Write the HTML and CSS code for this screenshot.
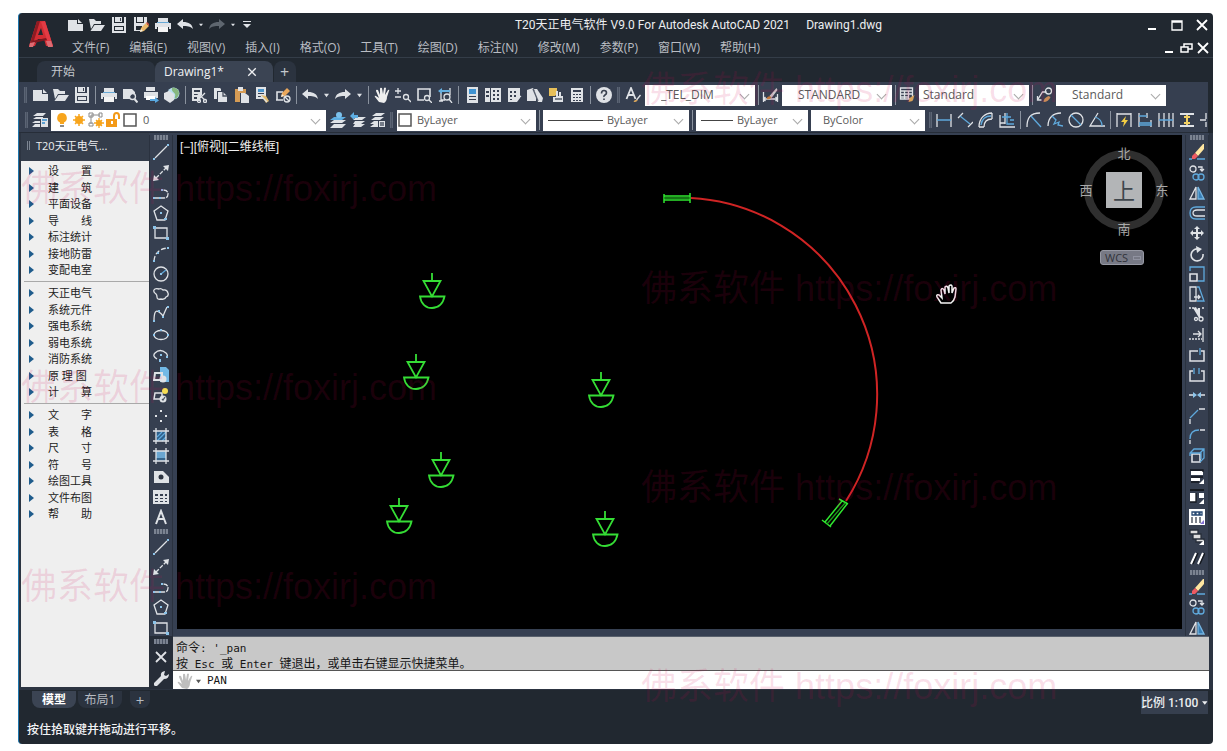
FILE: index.html
```html
<!DOCTYPE html>
<html lang="zh-CN">
<head>
<meta charset="utf-8">
<title>T20天正电气软件 V9.0 For Autodesk AutoCAD 2021</title>
<link rel="stylesheet" href="styles.css">
</head>
<body>
<svg class="sprite" aria-hidden="true">
  <symbol id="new" viewBox="0 0 16 16"><path class="f" d="M1 3h9v4h6v7H1z"/><path class="f" d="M11 2l4 4h-4z"/></symbol>
  <symbol id="open" viewBox="0 0 16 16"><path class="f" d="M0 2h5l2 2h5v3H5l-3 5z"/><path class="f" d="M5.500 8H16l-4 6H1.500z"/></symbol>
  <symbol id="save" viewBox="0 0 16 16"><path class="f" fill-rule="evenodd" d="M1 0h2v6h10V0h2v16H1zM3 9v5h10V9z"/><path class="f" d="M4 0h7v5H4zM4 10h8v3H4z"/><path d="M9 1h1v3H9z" fill="#39414f"/></symbol>
  <symbol id="saveas" viewBox="0 0 16 16"><path class="f" fill-rule="evenodd" d="M1 0h2v6h8V0h3v8l-6 6H1zM3 9v4h6V9z"/><path class="f" d="M4 0h6v5H4z"/><path d="M7 15l1-4 5-5 3 3-5 5z" fill="#e9b868"/><path d="M7 15l1-3 2 2z" fill="#f5eee0"/><path d="M13 6l3 3 0-2-2-2z" fill="#d0523f"/></symbol>
  <symbol id="print" viewBox="0 0 16 16"><path class="f" d="M3 1h10v4H3zM0 6h16v6h-2v-2H2v2H0z"/><path d="M3 10h10v5H3z" fill="#f4f4f4"/><path d="M2 5.500h12" stroke="#68a9d6" stroke-width="1"/></symbol>
  <symbol id="preview" viewBox="0 0 16 16"><path class="f" d="M1 2h9l3 3v2a4 4 0 0 0-5 5H1z"/><circle class="s" cx="10.500" cy="9.500" r="3"/><path class="s" d="M12.500 12l3 3.500" stroke-width="2"/></symbol>
  <symbol id="plot" viewBox="0 0 16 16"><path class="f" d="M3 0h9v4H3zM1 5h14v6H1z"/><path d="M3 9h9v4H3z" fill="#fff"/><path d="M7 12h5v-2l4 3.500-4 2.500v-2H7z" fill="#59a8e0"/></symbol>
  <symbol id="globe" viewBox="0 0 16 16"><circle cx="9.500" cy="6.500" r="6" fill="#b9dff0"/><path d="M8 1c4-1 7 2 7 5s-2 5-4 6c-1-2 1-3 0-5S7 4 8 1z" fill="#87b880"/><path class="f" d="M0 6l5-2 5 3v6l-4 3-6-4z"/></symbol>
  <symbol id="cut" viewBox="0 0 16 16"><path class="f" fill-rule="evenodd" d="M1 1h10v7l-2 2v4H1zM3 3v2h6V3zm0 4v1h5V7zm0 3v2h3v-2z"/><path class="s" d="M6 6l8 7M14 6l-7 7"/><circle class="s" cx="14" cy="14" r="1.500"/><circle class="s" cx="8" cy="14" r="1.500"/></symbol>
  <symbol id="copy" viewBox="0 0 16 16"><path class="f" d="M2 1h6l1 1v2H5v8H2z"/><path class="f" d="M6 5h5l4 4v6H6z"/><path d="M11 5v4h4" fill="none" stroke="#444c5b"/></symbol>
  <symbol id="paste" viewBox="0 0 16 16"><path d="M2 2h11v4H7v9H2z" fill="#d69c55"/><path class="f" d="M5 0h5v4H5zM8 6h4l4 3v7H8z"/></symbol>
  <symbol id="match" viewBox="0 0 16 16"><path class="f" fill-rule="evenodd" d="M2 0h10v12H2zM4 6v1h6V6zm0 3v1h6V9z"/><path d="M4 2h6v3H4z" fill="#4b94cb"/><path d="M7 8l5 1 3 5-3 2z" fill="#e3bb6c"/><path class="s" d="M7 9l6 6"/></symbol>
  <symbol id="blockedit" viewBox="0 0 16 16"><path class="s" d="M8 5H2v8h6M1 13h7" stroke-width="1.600"/><path d="M6 10l1-4 5-5 3 3-5 5z" fill="#eaa85c"/><path d="M6 10l1-3 2 2z" fill="#f5eee0"/><circle class="s" cx="12" cy="12" r="3"/><path class="s" d="M10 10l4 4"/></symbol>
  <symbol id="undo" viewBox="0 0 16 16"><path class="f" d="M0 7l6-5v3c6 0 9 2 10 7-3-3-6-3-10-3v3z"/></symbol>
  <symbol id="redo" viewBox="0 0 16 16"><path class="f" d="M16 7l-6-5v3C4 5 1 7 0 12c3-3 6-3 10-3v3z"/></symbol>
  <symbol id="hand" viewBox="0 0 16 16"><path d="M5 15L1 10q-1-2 1-1l3 2L2 4q0-2 2-1l2 5L6 2q0-2 2-1l1 6 1-6q1-1 2 0l-1 7 3-5q2-1 1 1l-2 6q0 4-3 6z" fill="#eee"/></symbol>
  <symbol id="zoomrt" viewBox="0 0 16 16"><path class="s" d="M0 4h6M3 1v6M0 10h6"/><circle class="s" cx="11" cy="10" r="2.500"/><path class="s" d="M13 12l3 3"/></symbol>
  <symbol id="zoomwin" viewBox="0 0 16 16"><path class="s" d="M8 13H2V2h12v8" stroke-width="1.600"/><circle class="s" cx="11" cy="11" r="2.500"/><path class="s" d="M13 13l3 3"/></symbol>
  <symbol id="zoomprev" viewBox="0 0 16 16"><path class="s" d="M4 5v8h4M13 5v3M2 14h4M13 1v4"/><path d="M1 4l4-3v2h8v2H5v2z" fill="#65b0e0"/><circle class="s" cx="10" cy="10" r="3"/><path class="s" d="M12 12l3 4"/></symbol>
  <symbol id="props" viewBox="0 0 16 16"><path class="f" fill-rule="evenodd" d="M3 0h11v16H3zM5 9v1h7V9zm0 3v1h7v-1z"/><path d="M5 2h7v5H5z" fill="#3f93d2"/></symbol>
  <symbol id="center" viewBox="0 0 16 16"><path class="f" fill-rule="evenodd" d="M0 1h5v14H0zM1 4v2h3V4zm0 4v2h3V8zM6 1h10v14H6zM8 3v2h2V3zm4 0v2h2V3zM8 7v2h2V7zm4 0v2h2V7zM8 11v2h2v-2zm4 0v2h2v-2z"/></symbol>
  <symbol id="palette" viewBox="0 0 16 16"><path class="f" fill-rule="evenodd" d="M2 1h12v10l-3 4H2zM4 4v2h2V4zm4 0v2h2V4zM4 8v2h2V8zm4 0v2h2V8zM4 12v1h2v-1z"/><path class="s" d="M10 13l5-4"/></symbol>
  <symbol id="sheets" viewBox="0 0 16 16"><path class="f" d="M0 3l6-2 3 6 0 7H0z"/><path class="f" d="M7 2l3 0 6 9-1 4h-4z"/><path d="M6 2l5 12" stroke="#555d6b" fill="none"/></symbol>
  <symbol id="markup" viewBox="0 0 16 16"><path d="M1 1h8v6l-2 2H1z" fill="#e7bf59"/><path class="f" d="M8 4h2v5h1V5h2v4h2v6H5v-5h3z"/><path d="M7 12h7" stroke="#535b69"/></symbol>
  <symbol id="calc" viewBox="0 0 16 16"><path class="f" fill-rule="evenodd" d="M2 1h12v14H2zM4 3v2h8V3zm0 4v1h2V7zm3 0v1h2V7zm3 0v1h2V7zm-6 3v1h2v-1zm3 0v1h2v-1zm3 0v1h2v-1zm-6 3v1h2v-1zm3 0v1h2v-1zm3 0v1h2v-1z"/></symbol>
  <symbol id="help" viewBox="0 0 16 16"><circle class="f" cx="8" cy="8" r="8"/><path d="M5.500 6.500q0-3 2.500-3t2.500 2.500q0 1-1.500 2T8 10" fill="none" stroke="#39414f" stroke-width="1.600"/><path d="M7.200 11.500h1.600v1.500H7.200z" fill="#39414f"/></symbol>
  <symbol id="textstyle" viewBox="0 0 16 16"><path class="s" d="M1 12L5.500 1 10 12M3 8h6" stroke-width="1.800"/><path class="s" d="M15 8l-4 5"/><path d="M8 15q1-3 4-2 0 2-4 2z" fill="#d7a45c"/></symbol>
  <symbol id="dimstyle" viewBox="0 0 16 16"><path class="s" d="M1 5v10M15 7v8M1 12h14M3 10l-2 2 2 2M13 10l2 2-2 2"/><path d="M7 9l7-8 1 2-6 8z" fill="#ccc"/><path d="M4 12q1-4 5-2-1 3-5 2z" fill="#c97a3d"/></symbol>
  <symbol id="tablestyle" viewBox="0 0 16 16"><path class="s" d="M1 1h12v11H1zM1 4h12M1 7h12M1 10h8M5 4v8M9 4v8"/><path d="M9 15l1-4 5-3-2 6z" fill="#d9a25b"/></symbol>
  <symbol id="leaderstyle" viewBox="0 0 16 16"><path class="s" d="M1 13L6 5h4M1 9v4h4"/><circle class="s" cx="12" cy="4" r="3"/><path d="M7 15q0-4 5-6l2 1q-2 5-7 5z" fill="#c98a58"/></symbol>
  <symbol id="layers" viewBox="0 0 16 16"><path class="f" d="M5 1h9l-3 3H1zM4 5h7v2H1zM3 9h5v2H0zM3 12h5v3H0z"/><path class="f" d="M9 6h7v9H9z"/><path d="M10 8h5M10 11h3" stroke="#358ccb"/></symbol>
  <symbol id="bulb" viewBox="0 0 16 16"><path d="M8 1a5 5 0 0 1 2 9.500V12H6v-1.500A5 5 0 0 1 8 1z" fill="#f7a51d"/><path d="M6 13h4v2H6z" fill="#8c8c8c"/></symbol>
  <symbol id="sun" viewBox="0 0 16 16"><circle cx="8" cy="8" r="4" fill="#f7a51d"/><path d="M8 2v12M2 8h12M4 4l8 8M12 4l-8 8" stroke="#f7a51d" stroke-width="1.500"/></symbol>
  <symbol id="vpfreeze" viewBox="0 0 16 16"><path d="M3 12V3h9M1 1h4v4H1zM11 1h3v4h-3zM1 11h4v3H1z" fill="none" stroke="#8a8a8a" stroke-width="1"/><circle cx="11" cy="11" r="3" fill="#f7a51d"/><path d="M11 6v10M6 11h10M8 8l6 6M14 8l-6 6" stroke="#f7a51d"/></symbol>
  <symbol id="lock" viewBox="0 0 16 16"><path d="M1 7h11v8H1z" fill="#f39a18"/><path d="M9 7V4q0-3 2.500-3T14 4v3" fill="none" stroke="#f39a18" stroke-width="2"/><path d="M6 9h2v3H6z" fill="#fff"/></symbol>
  <symbol id="swatch" viewBox="0 0 16 16"><path d="M2 2h12v12H2z" fill="#fff" stroke="#555" stroke-width="1.500"/></symbol>
  <symbol id="laycur" viewBox="0 0 16 16"><path class="f" d="M4 8h12l-4 3H0zM4 12h12l-4 4H0z"/><path d="M4 5h12l-4 3H0z" fill="#5eaee2"/><circle cx="9" cy="3" r="3" fill="#7bc1ec"/></symbol>
  <symbol id="layprev" viewBox="0 0 16 16"><path class="f" d="M6 5h10l-4 3H3zM5 9h10l-4 3H3zM5 12h10l-4 3H3z"/><path d="M0 4l4-4v3h4v3H4v2z" fill="#5eaee2"/></symbol>
  <symbol id="laystate" viewBox="0 0 16 16"><path class="f" d="M6 1h9l-4 3H2zM5 5h9l-4 3H1zM4 9h4v3H0zM4 12h4v3H0z"/><path class="f" d="M9 9h6v6H9z"/><path d="M10 11h4M10 13h4" stroke="#525a69"/></symbol>
  <symbol id="dlinear" viewBox="0 0 16 16"><path class="s" d="M1 2v13M15 2v13"/><path class="b" d="M1 8h14"/></symbol>
  <symbol id="dalign" viewBox="0 0 16 16"><path class="s" d="M1 6l5-5M11 15l5-5"/><path class="b" d="M3 4l10 8"/></symbol>
  <symbol id="darc" viewBox="0 0 16 16"><path class="s" d="M1 15C1 6 7 1 14 1M6 15c0-5 3-8 8-8M1 15h5M14 1v6"/><path class="b" d="M3 13C4 6 8 4 13 4"/></symbol>
  <symbol id="dord" viewBox="0 0 16 16"><path class="s" d="M1 3v12h15M6 1v11M1 11h5"/><path class="b" d="M3 5h9M8 1v11h7M11 8h4"/></symbol>
  <symbol id="drad" viewBox="0 0 16 16"><path class="s" d="M14 1C4 1 1 6 1 15"/><path class="b" d="M5 4l10 11"/></symbol>
  <symbol id="djog" viewBox="0 0 16 16"><path class="s" d="M14 1C6 1 1 6 1 14"/><path class="b" d="M5 4l4 4-2 4 5-2-1 3 5 1"/></symbol>
  <symbol id="ddia" viewBox="0 0 16 16"><circle class="s" cx="8" cy="8" r="7"/><path class="b" d="M3 3l10 10"/></symbol>
  <symbol id="dang" viewBox="0 0 16 16"><path class="s" d="M9 1L1 14h15"/><path class="b" d="M6 5q7 2 7 9"/></symbol>
  <symbol id="dquick" viewBox="0 0 16 16"><path class="s" d="M1 1v14M15 1v14M1 2h14"/><path d="M10 4l-5 6h3l-1 5 5-7H9z" fill="#f3ce43"/></symbol>
  <symbol id="dbase" viewBox="0 0 16 16"><path class="s" d="M2 1v14M10 1v5M14 8v7"/><path class="b" d="M2 4h8M2 11h12v2H2"/></symbol>
  <symbol id="dcont" viewBox="0 0 16 16"><path class="s" d="M1 1v14M6 1v14M11 1v14M15 1v14"/><path class="b" d="M1 8h14"/></symbol>
  <symbol id="dspace" viewBox="0 0 16 16"><path class="s" d="M1 2h14M1 14h14" stroke-width="2"/><path d="M8 3v10M5 5h6M5 11h6" stroke="#f3d163" stroke-width="2" fill="none"/></symbol>
  <symbol id="dbreak" viewBox="0 0 16 16"><path class="s" d="M6 1v6M6 10v5M0 8h6"/></symbol>
  <symbol id="line" viewBox="0 0 16 16"><path class="s" d="M2 14L14 2"/><path class="bf" d="M0 14h2v2H0zM14 0h2v2h-2z"/></symbol>
  <symbol id="xline" viewBox="0 0 16 16"><path class="s" d="M3 13L13 3" stroke-dasharray="4 1.500"/><path class="f" d="M0 16l1-6 5 5zM16 0l-6 1 5 5z"/></symbol>
  <symbol id="pline" viewBox="0 0 16 16"><path class="s" d="M1 13h10q4 0 4-4t-5-4" stroke-dasharray="5 1"/><path class="bf" d="M0 12h2v2H0zM6 12h2v2H6zM8 4h2v2H8z"/></symbol>
  <symbol id="polygon" viewBox="0 0 16 16"><path class="s" d="M8 1l7 5-3 9H4L1 6z"/><path class="bf" d="M7 7h2v2H7zM11 13h3v2h-3z"/></symbol>
  <symbol id="rect" viewBox="0 0 16 16"><path class="s" d="M3 3h11v10H2V4"/><path class="bf" d="M0 1h3v3H0zM13 12h3v3h-3z"/></symbol>
  <symbol id="arc" viewBox="0 0 16 16"><path class="s" d="M1 15Q2 3 15 2" stroke-dasharray="5 2"/><path class="bf" d="M0 14h2v2H0zM4 6h2v2H4zM14 1h2v2h-2z"/></symbol>
  <symbol id="circle" viewBox="0 0 16 16"><circle class="s" cx="8" cy="8" r="7"/><path class="b" d="M8 8l5-4"/><path class="bf" d="M7 7h2v2H7z"/></symbol>
  <symbol id="cloud" viewBox="0 0 16 16"><path class="s" d="M3 8Q0 6 1 4t5-1q2-1 4 1 4-1 5 3 1 3-2 4-1 3-5 2-4 1-4-2 0-2-1-3z"/></symbol>
  <symbol id="spline" viewBox="0 0 16 16"><path class="s" d="M1 15q0-13 5-9t4 5 4-10"/><path class="bf" d="M0 14h2v2H0zM5 4h2v2H5zM9 10h2v2H9zM14 0h2v2h-2z"/></symbol>
  <symbol id="ellipse" viewBox="0 0 16 16"><ellipse class="s" cx="8" cy="8" rx="7" ry="4.500"/><path class="bf" d="M0 7h2v2H0zM14 7h2v2h-2zM7 2h2v2H7z"/></symbol>
  <symbol id="earc" viewBox="0 0 16 16"><path class="s" d="M4 12Q-1 9 2 6q5-5 11 0 2 2 1 4"/><path class="bf" d="M7 7h2v2H7zM6 12h2v3H6zM13 9h2v2h-2z"/></symbol>
  <symbol id="insert" viewBox="0 0 16 16"><path d="M7 0h6l3 3v12H7z" fill="#72b9e6"/><path class="s" d="M2 6h7v7H1z" stroke-width="2"/><circle class="f" cx="10" cy="12" r="3.500"/></symbol>
  <symbol id="block" viewBox="0 0 16 16"><path class="s" d="M2 6h7v6H1z" stroke-width="1.500"/><circle class="f" cx="10" cy="12" r="3.500"/><circle cx="12" cy="4" r="3" fill="#f5dc54"/><path d="M9 12l1 1 2-3" fill="none" stroke="#4a5261"/></symbol>
  <symbol id="points" viewBox="0 0 16 16"><path class="f" d="M7 2h2v2H7zM2 7h2v2H2zM12 7h2v2h-2zM7 12h2v2H7z"/></symbol>
  <symbol id="hatch" viewBox="0 0 16 16"><path d="M3 3h10v10H3z" fill="#2e5f89"/><path class="b" d="M4 9l5-5M4 13l9-9M9 13l4-4"/><path class="s" d="M3 0v16M13 0v16M0 3h16M0 13h16"/></symbol>
  <symbol id="gradient" viewBox="0 0 16 16"><path d="M3 3h10v7H3z" fill="#6aa6d1"/><path d="M3 10h10v3H3z" fill="#36658c"/><path class="s" d="M3 0v16M13 0v16M0 3h16M0 13h16"/></symbol>
  <symbol id="region" viewBox="0 0 16 16"><path class="f" d="M1 2h9l6 6v6H1z"/><circle cx="8" cy="8" r="2.500" fill="#2c3340"/></symbol>
  <symbol id="table" viewBox="0 0 16 16"><path class="f" fill-rule="evenodd" d="M0 1h16v14H0zM2 5v2h3V5zm5 0v2h3V5zm5 0v2h2V5zM2 9v1h3V9zm5 0v1h3V9zm5 0v1h2V9zM2 12v1h3v-1zm5 0v1h3v-1zm5 0v1h2v-1z"/></symbol>
  <symbol id="mtext" viewBox="0 0 16 16"><path class="s" d="M3 15L8 2l5 13M5 10h6" stroke-width="2"/></symbol>
  <symbol id="erase" viewBox="0 0 16 16"><path d="M6 9l8-9h1v5l-6 7z" fill="#ffe6a0"/><path d="M3 12l3-3 3 3-3 3H3z" fill="#ee5a62"/><path class="b" d="M0 15h3M8 15h8"/></symbol>
  <symbol id="copyobj" viewBox="0 0 16 16"><circle class="s" cx="4" cy="4" r="3"/><path class="s" d="M9 2h4v4M11 4l2 2 2-2"/><circle class="b" cx="7" cy="12" r="3"/><circle class="b" cx="12" cy="12" r="3"/></symbol>
  <symbol id="mirror" viewBox="0 0 16 16"><path class="s" d="M7 2v12H1z"/><path d="M9 2v12h6z" fill="#387eb5" stroke="#76b5e1"/></symbol>
  <symbol id="offset" viewBox="0 0 16 16"><path class="s" d="M16 5H8Q4 5 4 8t4 3h8"/><path class="b" d="M16 2H7Q1 2 1 8t6 6h9"/></symbol>
  <symbol id="move" viewBox="0 0 16 16"><path class="f" d="M8 1l3 3H9v3h3V5l3 3-3 3V9H9v3h2l-3 3-3-3h2V9H4v2L1 8l3-3v2h3V4H5z"/></symbol>
  <symbol id="rotate" viewBox="0 0 16 16"><path class="s" d="M9 3a6 6 0 1 0 5 5" stroke-width="1.600"/><path class="f" d="M7 0l6 3-5 4z"/></symbol>
  <symbol id="scale" viewBox="0 0 16 16"><path class="b" d="M1 5V1h14v14H9"/><path class="s" d="M1 8h7v7H1z" stroke-width="1.600"/></symbol>
  <symbol id="stretch" viewBox="0 0 16 16"><path class="s" d="M1 1h6v14H1zM5 11h6M9 9l2 2-2 2"/><path class="b" d="M8 1h2l5 14H8"/></symbol>
  <symbol id="trim" viewBox="0 0 16 16"><path class="s" d="M0 2h5M13 2h3" stroke-dasharray="2 1"/><path class="f" d="M4 2l3-1 5 10-2 1zM9 2h2v8H9L7 7z"/><circle class="s" cx="7" cy="13" r="1.500"/><circle class="s" cx="12" cy="13" r="2"/></symbol>
  <symbol id="extend" viewBox="0 0 16 16"><path class="s" d="M14 1v14M4 7h7M9 4l3 3-3 3"/><path class="s" d="M0 12h13" stroke-dasharray="2 1"/></symbol>
  <symbol id="breakpt" viewBox="0 0 16 16"><path class="s" d="M9 4H1v10h14V4h-3" stroke-width="1.500"/><path class="b" d="M11 1v7"/></symbol>
  <symbol id="break" viewBox="0 0 16 16"><path class="s" d="M4 4H1v10h14V4h-3" stroke-width="1.500"/><path class="b" d="M5 1v6M10 1v6"/></symbol>
  <symbol id="join" viewBox="0 0 16 16"><path class="s" d="M0 8h5M11 8h5"/><path class="bf" d="M4 5l4 3-4 3zM12 5L8 8l4 3z"/></symbol>
  <symbol id="chamfer" viewBox="0 0 16 16"><path class="s" d="M1 16v-5M10 1h6"/><path class="b" d="M1 10l8-8"/></symbol>
  <symbol id="fillet" viewBox="0 0 16 16"><path class="s" d="M1 16v-4M11 2h5"/><path class="b" d="M1 11q0-9 9-9"/></symbol>
  <symbol id="explode" viewBox="0 0 16 16"><path class="s" d="M3 6h8v8H3z" stroke-width="1.600"/><path class="b" d="M1 8V5l4-4h10v9l-4 4M11 5l4-4M1 5h11v6"/></symbol>
  <symbol id="front" viewBox="0 0 16 16"><path d="M2 2h12v4H2zM2 9h9v3H2z" fill="#fff"/><path d="M1 1h13v2M2 8h12M2 13h8" stroke="#15191f" fill="none"/><path d="M15 10v5h-5z" fill="#fff"/></symbol>
  <symbol id="back" viewBox="0 0 16 16"><path d="M1 1h14" stroke="#15191f" stroke-width="2"/><path d="M1 4h6v9H1zM10 4h5v5h-5z" fill="#fff"/><path d="M7 4v9H1" fill="none" stroke="#15191f"/><path d="M15 10v5h-5z" fill="#fff"/></symbol>
  <symbol id="order" viewBox="0 0 16 16"><path d="M0 0h16v16H0z" fill="#fff"/><path d="M3 3h3v3H3zM7 3h3v3H7zM11 3h2v3h-2z" fill="none" stroke="#284a73"/><path d="M3 8v6M7 8v6M11 8v6" stroke="#39414f"/><path d="M15 11v4h-4z" fill="#8370d4"/></symbol>
  <symbol id="annot" viewBox="0 0 16 16"><path d="M1 1h8v4H1zM4 5h8v5H4zM7 10h8v3H7z" fill="#dedede" stroke="#272e39"/><path d="M15 11v5h-5z" fill="#fff"/></symbol>
  <symbol id="parallel" viewBox="0 0 16 16"><path d="M2 14L7 3M9 14l5-11" stroke="#fff" stroke-width="2"/><path d="M4 14L9 3M11 14l5-11" stroke="#15191f"/></symbol>
  <symbol id="x" viewBox="0 0 16 16"><path class="s" d="M3 3l10 10M13 3L3 13" stroke-width="1.800"/></symbol>
  <symbol id="min" viewBox="0 0 16 16"><path class="s" d="M4 12h8" stroke-width="2"/></symbol>
  <symbol id="max" viewBox="0 0 16 16"><path class="s" d="M3 4h10v9H3zM3 5h10"/></symbol>
  <symbol id="restore" viewBox="0 0 16 16"><path class="s" d="M3 7h7v5H3zM6 7V4h8v5h-4" stroke-width="1.500"/></symbol>
  <symbol id="caret" viewBox="0 0 6 6"><path class="f" d="M0 1h6L3 5z"/></symbol>
  <symbol id="drop" viewBox="0 0 12 12"><path class="f" d="M2 2h8v1H2zM2 5h8l-4 4z"/></symbol>
  <symbol id="wrench" viewBox="0 0 16 16"><path class="f" d="M1 13l7-7q-1-4 4-5l-1 4 2 1 3-2q0 5-5 5l-7 7q-2 1-3-1z"/></symbol>
  <symbol id="lamp" viewBox="-14 -1 28 38" overflow="visible"><path d="M0 0v8M-8.500 8h17L0 23.500zM-12 23.500h24.500C11 31 6 35 0 35s-11-4-12-11.500z" fill="none" stroke="#35dd35" stroke-width="1.800"/></symbol>
</svg>

<main class="app">
  <header class="header">
    <svg class="logo" viewBox="0 0 24 28" role="img" aria-label="AutoCAD"><path d="M8 1h8l8 25h-7l-2-7H9l-3 7H0z" fill="#d12c33"/><path d="M12 8l2 7h-5z" fill="#212830"/><path d="M8 1h3L3 27H0z" fill="#8e1b22"/><path d="M16 1l8 25h-4L12 2z" fill="#e23b44"/><path d="M3 21l14-3 1 2-13 3z" fill="#7d1820"/><path d="M1 23l5-1-2 5H0zM17 21l5 0 2 6h-5z" fill="#dc6d74"/></svg>
    <div class="rows">
      <div class="titlebar">
        <div class="quick">
          <button aria-label="新建"><svg><use href="#new"/></svg></button>
          <button aria-label="打开"><svg><use href="#open"/></svg></button>
          <button aria-label="保存"><svg><use href="#save"/></svg></button>
          <button aria-label="另存为"><svg><use href="#saveas"/></svg></button>
          <button aria-label="打印"><svg><use href="#print"/></svg></button>
          <button aria-label="放弃"><svg><use href="#undo"/></svg></button>
          <button class="tiny" aria-label="放弃列表"><svg><use href="#caret"/></svg></button>
          <button class="dim" aria-label="重做"><svg><use href="#redo"/></svg></button>
          <button class="tiny" aria-label="重做列表"><svg><use href="#caret"/></svg></button>
          <button class="drop" aria-label="自定义"><svg><use href="#drop"/></svg></button>
        </div>
        <h1 class="title">T20天正电气软件 V9.0 For Autodesk AutoCAD 2021<span>Drawing1.dwg</span></h1>
        <div class="controls wide">
          <button aria-label="最小化"><svg><use href="#min"/></svg></button>
          <button aria-label="最大化"><svg><use href="#max"/></svg></button>
          <button aria-label="关闭"><svg><use href="#x"/></svg></button>
        </div>
      </div>
      <div class="menurow">
        <nav class="menus">
          <button>文件(F)</button><button>编辑(E)</button><button>视图(V)</button><button>插入(I)</button><button>格式(O)</button><button>工具(T)</button><button>绘图(D)</button><button>标注(N)</button><button>修改(M)</button><button>参数(P)</button><button>窗口(W)</button><button>帮助(H)</button>
        </nav>
        <div class="controls">
          <button aria-label="最小化图形"><svg><use href="#min"/></svg></button>
          <button aria-label="还原图形"><svg><use href="#restore"/></svg></button>
          <button aria-label="关闭图形"><svg><use href="#x"/></svg></button>
        </div>
      </div>
    </div>
  </header>

  <div class="filetabs">
    <button class="filetab">开始</button>
    <div class="filetab on"><button>Drawing1*</button><button class="tabclose" aria-label="关闭标签"><svg><use href="#x"/></svg></button></div>
    <button class="filetab add" aria-label="新图形">+</button>
  </div>

  <div class="toolbar">
    <i class="grip"></i>
    <button aria-label="新建"><svg><use href="#new"/></svg></button>
    <button aria-label="打开"><svg><use href="#open"/></svg></button>
    <button aria-label="保存"><svg><use href="#save"/></svg></button>
    <i class="sep"></i>
    <button aria-label="打印"><svg><use href="#print"/></svg></button>
    <button aria-label="打印预览"><svg><use href="#preview"/></svg></button>
    <button aria-label="发布"><svg><use href="#plot"/></svg></button>
    <button aria-label="三维打印"><svg><use href="#globe"/></svg></button>
    <i class="sep"></i>
    <button aria-label="剪切"><svg><use href="#cut"/></svg></button>
    <button aria-label="复制"><svg><use href="#copy"/></svg></button>
    <button aria-label="粘贴"><svg><use href="#paste"/></svg></button>
    <button aria-label="特性匹配"><svg><use href="#match"/></svg></button>
    <button aria-label="块编辑器"><svg><use href="#blockedit"/></svg></button>
    <i class="sep"></i>
    <button aria-label="放弃"><svg><use href="#undo"/></svg></button>
    <button class="tiny" aria-label="放弃列表"><svg><use href="#caret"/></svg></button>
    <button aria-label="重做"><svg><use href="#redo"/></svg></button>
    <button class="tiny" aria-label="重做列表"><svg><use href="#caret"/></svg></button>
    <i class="sep"></i>
    <button aria-label="实时平移"><svg><use href="#hand"/></svg></button>
    <button aria-label="实时缩放"><svg><use href="#zoomrt"/></svg></button>
    <button aria-label="窗口缩放"><svg><use href="#zoomwin"/></svg></button>
    <button aria-label="缩放上一个"><svg><use href="#zoomprev"/></svg></button>
    <i class="sep"></i>
    <button aria-label="特性"><svg><use href="#props"/></svg></button>
    <button aria-label="设计中心"><svg><use href="#center"/></svg></button>
    <button aria-label="工具选项板"><svg><use href="#palette"/></svg></button>
    <button aria-label="图纸集"><svg><use href="#sheets"/></svg></button>
    <button aria-label="标记集"><svg><use href="#markup"/></svg></button>
    <button aria-label="计算器"><svg><use href="#calc"/></svg></button>
    <i class="sep"></i>
    <button aria-label="帮助"><svg><use href="#help"/></svg></button>
    <i class="grip"></i>
    <div class="styles">
      <button aria-label="文字样式管理"><svg><use href="#textstyle"/></svg></button>
      <div class="combo"><select class="in16" aria-label="文字样式"><option>_TEL_DIM</option></select></div>
      <i class="sep"></i>
      <button aria-label="标注样式管理"><svg><use href="#dimstyle"/></svg></button>
      <div class="combo"><select class="in16" aria-label="标注样式"><option>STANDARD</option></select></div>
      <i class="sep"></i>
      <button aria-label="表格样式管理"><svg><use href="#tablestyle"/></svg></button>
      <div class="combo"><select class="in4" aria-label="表格样式"><option>Standard</option></select></div>
      <i class="sep"></i>
      <button aria-label="引线样式管理"><svg><use href="#leaderstyle"/></svg></button>
      <div class="combo"><select class="in16" aria-label="引线样式"><option>Standard</option></select></div>
    </div>
  </div>

  <div class="toolbar second">
    <i class="grip"></i>
    <div class="styles">
      <button aria-label="图层特性"><svg><use href="#layers"/></svg></button>
      <div class="combo layer"><svg><use href="#bulb"/></svg><svg><use href="#sun"/></svg><svg><use href="#vpfreeze"/></svg><svg><use href="#lock"/></svg><svg><use href="#swatch"/></svg><select class="in4" aria-label="图层"><option>0</option></select></div>
    </div>
    <button aria-label="置为当前"><svg><use href="#laycur"/></svg></button>
    <button aria-label="上一个图层"><svg><use href="#layprev"/></svg></button>
    <button aria-label="图层状态"><svg><use href="#laystate"/></svg></button>
    <i class="grip"></i>
    <div class="styles">
      <div class="combo color"><svg><use href="#swatch"/></svg><select class="in4" aria-label="颜色"><option>ByLayer</option></select></div>
      <i class="sep"></i>
      <div class="combo ltype"><i class="rule"></i><select class="in4" aria-label="线型"><option>ByLayer</option></select></div>
      <i class="sep"></i>
      <div class="combo lweight"><i class="rule"></i><select class="in4" aria-label="线宽"><option>ByLayer</option></select></div>
      <div class="combo plotstyle"><select class="in12" aria-label="打印样式"><option>ByColor</option></select></div>
    </div>
    <i class="grip"></i>
    <div class="dims">
      <button aria-label="线性"><svg><use href="#dlinear"/></svg></button>
      <button aria-label="对齐"><svg><use href="#dalign"/></svg></button>
      <button aria-label="弧长"><svg><use href="#darc"/></svg></button>
      <button aria-label="坐标"><svg><use href="#dord"/></svg></button>
      <i class="sep"></i>
      <button aria-label="半径"><svg><use href="#drad"/></svg></button>
      <button aria-label="折弯"><svg><use href="#djog"/></svg></button>
      <button aria-label="直径"><svg><use href="#ddia"/></svg></button>
      <button aria-label="角度"><svg><use href="#dang"/></svg></button>
      <i class="sep"></i>
      <button aria-label="快速标注"><svg><use href="#dquick"/></svg></button>
      <button aria-label="基线"><svg><use href="#dbase"/></svg></button>
      <button aria-label="连续"><svg><use href="#dcont"/></svg></button>
      <button aria-label="等距标注"><svg><use href="#dspace"/></svg></button>
      <button aria-label="折断标注"><svg><use href="#dbreak"/></svg></button>
    </div>
  </div>

  <div class="body">
    <aside class="panel">
      <h2 class="panelhead"><i class="bars"></i>T20天正电气...</h2>
      <ul class="group">
        <li><button>设　　置</button></li><li><button>建　　筑</button></li><li><button>平面设备</button></li><li><button>导　　线</button></li><li><button>标注统计</button></li><li><button>接地防雷</button></li><li><button>变配电室</button></li>
      </ul>
      <ul class="group">
        <li><button>天正电气</button></li><li><button>系统元件</button></li><li><button>强电系统</button></li><li><button>弱电系统</button></li><li><button>消防系统</button></li><li><button>原 理 图</button></li><li><button>计　　算</button></li>
      </ul>
      <ul class="group">
        <li><button>文　　字</button></li><li><button>表　　格</button></li><li><button>尺　　寸</button></li><li><button>符　　号</button></li><li><button>绘图工具</button></li><li><button>文件布图</button></li><li><button>帮　　助</button></li>
      </ul>
    </aside>

    <div class="work">
      <div class="stage">
        <div class="vbar">
          <i class="vgrip"></i>
          <button aria-label="直线"><svg><use href="#line"/></svg></button>
          <button aria-label="构造线"><svg><use href="#xline"/></svg></button>
          <button aria-label="多段线"><svg><use href="#pline"/></svg></button>
          <button aria-label="多边形"><svg><use href="#polygon"/></svg></button>
          <button aria-label="矩形"><svg><use href="#rect"/></svg></button>
          <button aria-label="圆弧"><svg><use href="#arc"/></svg></button>
          <button aria-label="圆"><svg><use href="#circle"/></svg></button>
          <button aria-label="修订云线"><svg><use href="#cloud"/></svg></button>
          <button aria-label="样条曲线"><svg><use href="#spline"/></svg></button>
          <button aria-label="椭圆"><svg><use href="#ellipse"/></svg></button>
          <button aria-label="椭圆弧"><svg><use href="#earc"/></svg></button>
          <button aria-label="插入块"><svg><use href="#insert"/></svg></button>
          <button aria-label="创建块"><svg><use href="#block"/></svg></button>
          <button aria-label="点"><svg><use href="#points"/></svg></button>
          <button aria-label="图案填充"><svg><use href="#hatch"/></svg></button>
          <button aria-label="渐变色"><svg><use href="#gradient"/></svg></button>
          <button aria-label="面域"><svg><use href="#region"/></svg></button>
          <button aria-label="表格"><svg><use href="#table"/></svg></button>
          <button aria-label="多行文字"><svg><use href="#mtext"/></svg></button>
          <i class="vgrip"></i>
          <button aria-label="直线"><svg><use href="#line"/></svg></button>
          <button aria-label="构造线"><svg><use href="#xline"/></svg></button>
          <button aria-label="多段线"><svg><use href="#pline"/></svg></button>
          <button aria-label="多边形"><svg><use href="#polygon"/></svg></button>
          <button aria-label="矩形"><svg><use href="#rect"/></svg></button>
        </div>

        <section class="canvas" aria-label="绘图区">
          <svg class="drawing" width="1004" height="494">
            <path d="M514 63A197 197 0 0 1 669 366" fill="none" stroke="#cf2424" stroke-width="2"/>
            <g fill="none" stroke="#2fe62f" stroke-width="1.500"><path d="M487 59v9M513 58v10M487 61h26M487 65h26"/><path d="M662 364l9 5M645 385l9 7M665 366l-17 21M670 369l-17 22"/></g>
            <path d="M487 63h26M668 368l-18 21" fill="none" stroke="#1b9a1b"/>
            <use href="#lamp" x="241" y="137" width="28" height="38"/>
            <use href="#lamp" x="225" y="218" width="28" height="38"/>
            <use href="#lamp" x="410" y="236" width="28" height="38"/>
            <use href="#lamp" x="250" y="316" width="28" height="38"/>
            <use href="#lamp" x="208" y="362" width="28" height="38"/>
            <use href="#lamp" x="414" y="375" width="28" height="38"/>
            <path d="M764 168l-4-6q-1-3 2-2l3 3-1-8q1-3 3 0l1 4-0-7q2-2 3 1l1 5 0-7q2-2 3 0l0 7 2-5q2-1 2 1l-1 8q-1 4-4 6z" fill="#000" stroke="#f5f5f5" stroke-width="1.500"/>
          </svg>
          <p class="viewlabel">[−][俯视][二维线框]</p>
          <div class="compass"><b class="n">北</b><b class="w">西</b><button class="face">上</button><b class="e">东</b><b class="s2">南</b></div>
          <button class="wcs">WCS<i></i></button>
        </section>

        <div class="vbar">
          <i class="vgrip"></i>
          <button aria-label="删除"><svg><use href="#erase"/></svg></button>
          <button aria-label="复制对象"><svg><use href="#copyobj"/></svg></button>
          <button aria-label="镜像"><svg><use href="#mirror"/></svg></button>
          <button aria-label="偏移"><svg><use href="#offset"/></svg></button>
          <button aria-label="移动"><svg><use href="#move"/></svg></button>
          <button aria-label="旋转"><svg><use href="#rotate"/></svg></button>
          <button aria-label="缩放"><svg><use href="#scale"/></svg></button>
          <button aria-label="拉伸"><svg><use href="#stretch"/></svg></button>
          <button aria-label="修剪"><svg><use href="#trim"/></svg></button>
          <button aria-label="延伸"><svg><use href="#extend"/></svg></button>
          <button aria-label="打断于点"><svg><use href="#breakpt"/></svg></button>
          <button aria-label="打断"><svg><use href="#break"/></svg></button>
          <button aria-label="合并"><svg><use href="#join"/></svg></button>
          <button aria-label="倒角"><svg><use href="#chamfer"/></svg></button>
          <button aria-label="圆角"><svg><use href="#fillet"/></svg></button>
          <button aria-label="分解"><svg><use href="#explode"/></svg></button>
          <button aria-label="前置"><svg><use href="#front"/></svg></button>
          <button aria-label="后置"><svg><use href="#back"/></svg></button>
          <button aria-label="绘图次序"><svg><use href="#order"/></svg></button>
          <button aria-label="注释前置"><svg><use href="#annot"/></svg></button>
          <button aria-label="平行"><svg><use href="#parallel"/></svg></button>
          <i class="vgrip"></i>
          <button aria-label="删除"><svg><use href="#erase"/></svg></button>
          <button aria-label="复制对象"><svg><use href="#copyobj"/></svg></button>
          <button aria-label="镜像"><svg><use href="#mirror"/></svg></button>
        </div>
      </div>

      <div class="cmdrow">
        <div class="cmdtools"><i class="vgrip"></i><button aria-label="关闭命令行"><svg><use href="#x"/></svg></button><button aria-label="自定义命令行"><svg><use href="#wrench"/></svg></button></div>
        <div class="cmd">
          <div class="history"><p>命令<span class="mono">: '_pan</span></p><p>按<span class="mono"> Esc </span>或<span class="mono"> Enter </span>键退出，或单击右键显示快捷菜单。</p></div>
          <label class="prompt"><svg class="palm"><use href="#hand"/></svg><svg class="pcaret"><use href="#caret"/></svg><input class="mono" aria-label="命令行" value="PAN"></label>
        </div>
      </div>
    </div>
  </div>

  <div class="layoutrow">
    <button class="ltab on">模型</button><button class="ltab">布局1</button><button class="ltab plus" aria-label="新建布局">+</button>
    <button class="ratio">比例 1:100<svg><use href="#caret"/></svg></button>
  </div>
  <footer class="status">按住拾取键并拖动进行平移。</footer>

  <div class="marks" aria-hidden="true">
    <div><p>佛系软件 https://foxirj.com</p><p>佛系软件 https://foxirj.com</p><p>佛系软件 https://foxirj.com</p></div>
    <div><p>佛系软件 https://foxirj.com</p><p>佛系软件 https://foxirj.com</p><p>佛系软件 https://foxirj.com</p><p>佛系软件 https://foxirj.com</p></div>
  </div>
</main>
</body>
</html>
```

FILE: styles.css
```css
* { box-sizing: border-box; }

body {
  margin: 0;
  padding: 13px 14px 7px 18px;
  height: 100vh;
  background: #fff;
  color: #dfe2e6;
  font: 12px/16px "Open Sans", "Noto Sans CJK SC", sans-serif;
}

h1, h2, p, ul { margin: 0; padding: 0; font: inherit; }
ul { list-style: none; }

button, select, input {
  margin: 0;
  padding: 0;
  border: 0;
  background: none;
  color: inherit;
  font: inherit;
}

svg { display: block; width: 16px; height: 16px; stroke-width: 1.3; }
.sprite { position: absolute; width: 0; height: 0; }

.f { fill: currentColor; }
.s { fill: none; stroke: currentColor; }
.b { fill: none; stroke: #5fa9dc; }
.bf { fill: #8cc4ea; }

.app {
  position: relative;
  display: flex;
  flex-direction: column;
  height: 100%;
  overflow: hidden;
  border-left: 1px solid #1e76ad;
  border-radius: 4px;
  background: #212830;
}

/* Title and menus */
.header {
  display: flex;
  gap: 14px;
  padding-left: 10px;
  border-bottom: 1px solid #343d48;
}
.logo { width: 24px; height: 28px; margin-top: 7px; }
.rows { flex: 1; }
.titlebar { display: flex; align-items: center; height: 24px; }
.quick { display: flex; align-items: center; gap: 6px; }
.quick .tiny svg { width: 4px; height: 4px; }
.quick .drop svg { width: 12px; height: 12px; }
.quick .dim { color: #5e666f; }
.title { flex: 1; text-align: center; color: #eceef0; font-family: Roboto, "Noto Sans CJK SC", sans-serif; }
.title span { margin-left: 16px; }
.menurow { display: flex; align-items: center; justify-content: space-between; height: 20px; padding-top: 2px; }
.menus { display: flex; gap: 20px; padding-left: 5px; color: #b9bdc3; }
.controls { display: flex; gap: 1px; padding-right: 2px; color: #fff; }
.controls.wide { gap: 9px; padding-right: 3px; }

/* Drawing tabs */
.filetabs { display: flex; align-items: flex-end; height: 24px; padding-left: 18px; }
.filetab {
  width: 118px;
  height: 21px;
  padding-left: 14px;
  border-radius: 8px 8px 0 0;
  background: #2b333f;
  color: #c4c8cd;
  text-align: left;
}
.filetab.on {
  display: flex;
  align-items: center;
  justify-content: space-between;
  padding: 0 15px 0 9px;
  background: #3b4453;
  color: #f0f1f3;
}
.filetab.add { width: 22px; margin-left: 1px; padding: 0 6px; font-size: 16px; line-height: 16px; }
.tabclose svg { width: 12px; height: 12px; }

/* Horizontal toolbars */
.toolbar {
  display: flex;
  align-items: center;
  gap: 5px;
  height: 26px;
  padding-left: 5px;
  margin-right: 5px;
  background: #363f50;
  overflow: hidden;
}
.toolbar > * { flex: none; }
.toolbar.second { gap: 4px; height: 25px; padding-left: 6px; border-bottom: 1px solid #262d38; }
.toolbar .tiny svg { width: 7px; height: 5px; }
.grip { width: 3px; height: 16px; border: solid #5b6474; border-width: 0 1px; background: #4a5363; }
.sep { width: 1px; height: 18px; background: #8a929e; }
.styles { display: flex; align-items: center; gap: 3px; }
.styles > .sep { height: 20px; }
.styles > button svg { width: 17px; }
.second .styles > button svg { width: 16px; }
.dims { display: flex; align-items: center; gap: 5px; }
.combo {
  position: relative;
  display: flex;
  align-items: center;
  width: 110px;
  height: 21px;
  background: #fff;
  color: #5a5a5a;
}
.second .combo { font-size: 11px; }
.combo::after {
  content: "";
  position: absolute;
  right: 7px;
  top: 6px;
  width: 6px;
  height: 6px;
  border: solid #a9a9a9;
  border-width: 0 1px 1px 0;
  transform: rotate(45deg);
}
.combo select { flex: 1; min-width: 0; height: 21px; appearance: none; }
.in4 { padding-left: 4px; }
.in12 { padding-left: 12px; }
.in16 { padding-left: 16px; }
.combo.layer { width: 275px; gap: 1px; padding-left: 3px; }
.combo.color { width: 139px; }
.combo.ltype { width: 146px; padding-left: 5px; }
.combo.lweight { width: 112px; padding-left: 5px; }
.combo.plotstyle { width: 114px; }
.rule { flex: none; width: 55px; height: 1px; background: #444; }
.lweight .rule { width: 32px; }

/* Work area */
.body { display: flex; flex: 1; min-height: 0; padding: 0 4px 0 2px; background: #2c3441; }
.panel { width: 128px; margin-bottom: 3px; background: #efefef; color: #222; }
.panelhead {
  display: flex;
  align-items: center;
  gap: 6px;
  height: 28px;
  padding: 0 0 3px 6px;
  margin-bottom: 2px;
  background: #343d4b;
  color: #eceef0;
  font-size: 11px;
}
.bars { width: 3px; height: 9px; border: solid #7c8592; border-width: 0 1px; }
.group {
  display: flex;
  flex-direction: column;
  justify-content: space-between;
  min-height: 115px;
}
.group + .group { margin: 3px 0 0 3px; padding-top: 3px; min-height: 119px; border-top: 1px solid #a9a9a9; }
.group button {
  display: flex;
  align-items: center;
  height: 16px;
  padding-left: 8px;
  font-size: 11px;
  white-space: pre;
}
.group + .group button { padding-left: 5px; }
.group button::before {
  content: "";
  margin-right: 14px;
  border: solid transparent;
  border-width: 4px 0 4px 5px;
  border-left-color: #1f5c8c;
}

.work { flex: 1; display: flex; flex-direction: column; min-width: 0; }
.stage { flex: 1; display: flex; min-height: 0; background: #364052; padding-top: 2px; }
.vbar {
  display: flex;
  flex-direction: column;
  align-items: center;
  justify-content: space-between;
  width: 24px;
  border: solid #2a323f;
  border-width: 0 1px;
  background: #363f50;
}
.vbar button { height: 16px; }
.vgrip {
  width: 14px;
  height: 5px;
  background: repeating-linear-gradient(90deg, #7b8391 0 2px, #4b5464 2px 3px);
}

.canvas {
  position: relative;
  flex: 1;
  min-width: 0;
  margin: 0 3px 7px 4px;
  overflow: hidden;
  background: #000;
}
.drawing { position: absolute; left: 0; top: 0; width: 1004px; height: 494px; }
.viewlabel { position: absolute; left: 3px; top: 4px; color: #f0f0f0; font-family: "Liberation Sans", "Noto Sans CJK SC", sans-serif; }
.compass {
  position: absolute;
  right: 18px;
  top: 15px;
  width: 80px;
  height: 80px;
  border: 8px solid #2f2f2f;
  border-radius: 50%;
  color: #a9a9a9;
}
.compass b { position: absolute; width: 14px; font: 13px/16px "Noto Sans CJK SC", sans-serif; text-align: center; }
.n { left: 25px; top: -13px; }
.s2 { left: 25px; bottom: -15px; }
.w { left: -13px; top: 24px; }
.e { right: -13px; top: 24px; }
.face {
  position: absolute;
  left: 14px;
  top: 14px;
  width: 36px;
  height: 36px;
  background: #b3b5b7;
  color: #3f464c;
  font-size: 22px;
  line-height: 32px;
}
.wcs {
  position: absolute;
  right: 38px;
  top: 115px;
  display: flex;
  align-items: center;
  gap: 5px;
  width: 44px;
  height: 15px;
  padding-left: 4px;
  border: 1px solid #9799a4;
  border-radius: 3px;
  background: #777985;
  color: #30323a;
  font-size: 11px;
}
.wcs i { width: 8px; height: 4px; border: 1px solid #9092a0; }

/* Command line */
.cmdrow { display: flex; height: 53px; margin-bottom: 1px; }
.cmdtools { display: flex; flex-direction: column; align-items: center; justify-content: space-between; width: 24px; padding: 3px 0; background: #262d38; }
.cmd { flex: 1; color: #161616; background: #fff; border-top: 1px solid #59616d; }
.history { height: 34px; padding: 3px 3px 0; border-bottom: 1px solid #555; background: #c8c8c8; }
.history p { font: 12px/14px "Noto Sans CJK SC", sans-serif; white-space: pre; }
.mono, .history .mono { font: 11px/14px "DejaVu Sans Mono", monospace; }
.prompt { display: flex; align-items: center; height: 18px; padding: 2px 0 0 4px; gap: 2px; }
.prompt input { flex: 1; margin-left: 3px; outline: 0; }
.palm { filter: brightness(0.8); }
.pcaret { width: 7px; height: 5px; color: #555; }

/* Layout tabs and status */
.layoutrow { display: flex; align-items: flex-start; gap: 2px; height: 24px; padding: 1px 5px 0 13px; }
.ltab { width: 44px; height: 17px; border-radius: 0 0 8px 8px; background: #2b333f; color: #b7bbc1; }
.ltab.on { background: #3b4453; color: #fff; font-weight: 700; }
.ltab.plus { width: 20px; margin-left: 6px; font-size: 15px; }
.ratio {
  display: flex;
  align-items: center;
  justify-content: center;
  gap: 4px;
  width: 67px;
  height: 23px;
  margin-left: auto;
  background: #363f4e;
  color: #eceef0;
  font-family: Roboto, "Noto Sans CJK SC", sans-serif;
  font-weight: 500;
  white-space: nowrap;
}
.ratio svg { width: 7px; height: 6px; }
.status { height: 30px; padding: 8px 0 0 8px; color: #f2f3f5; font-weight: 500; }

/* Repeating text mark laid over the window */
.marks { position: absolute; left: 2px; top: 51px; display: flex; gap: 204px; pointer-events: none; }
.marks div:first-child { padding-top: 99px; }
.marks p {
  height: 199px;
  color: rgba(210, 0, 80, 0.13);
  font: 36px/52px "Liberation Sans", "Noto Sans CJK SC", sans-serif;
  white-space: nowrap;
}
```
